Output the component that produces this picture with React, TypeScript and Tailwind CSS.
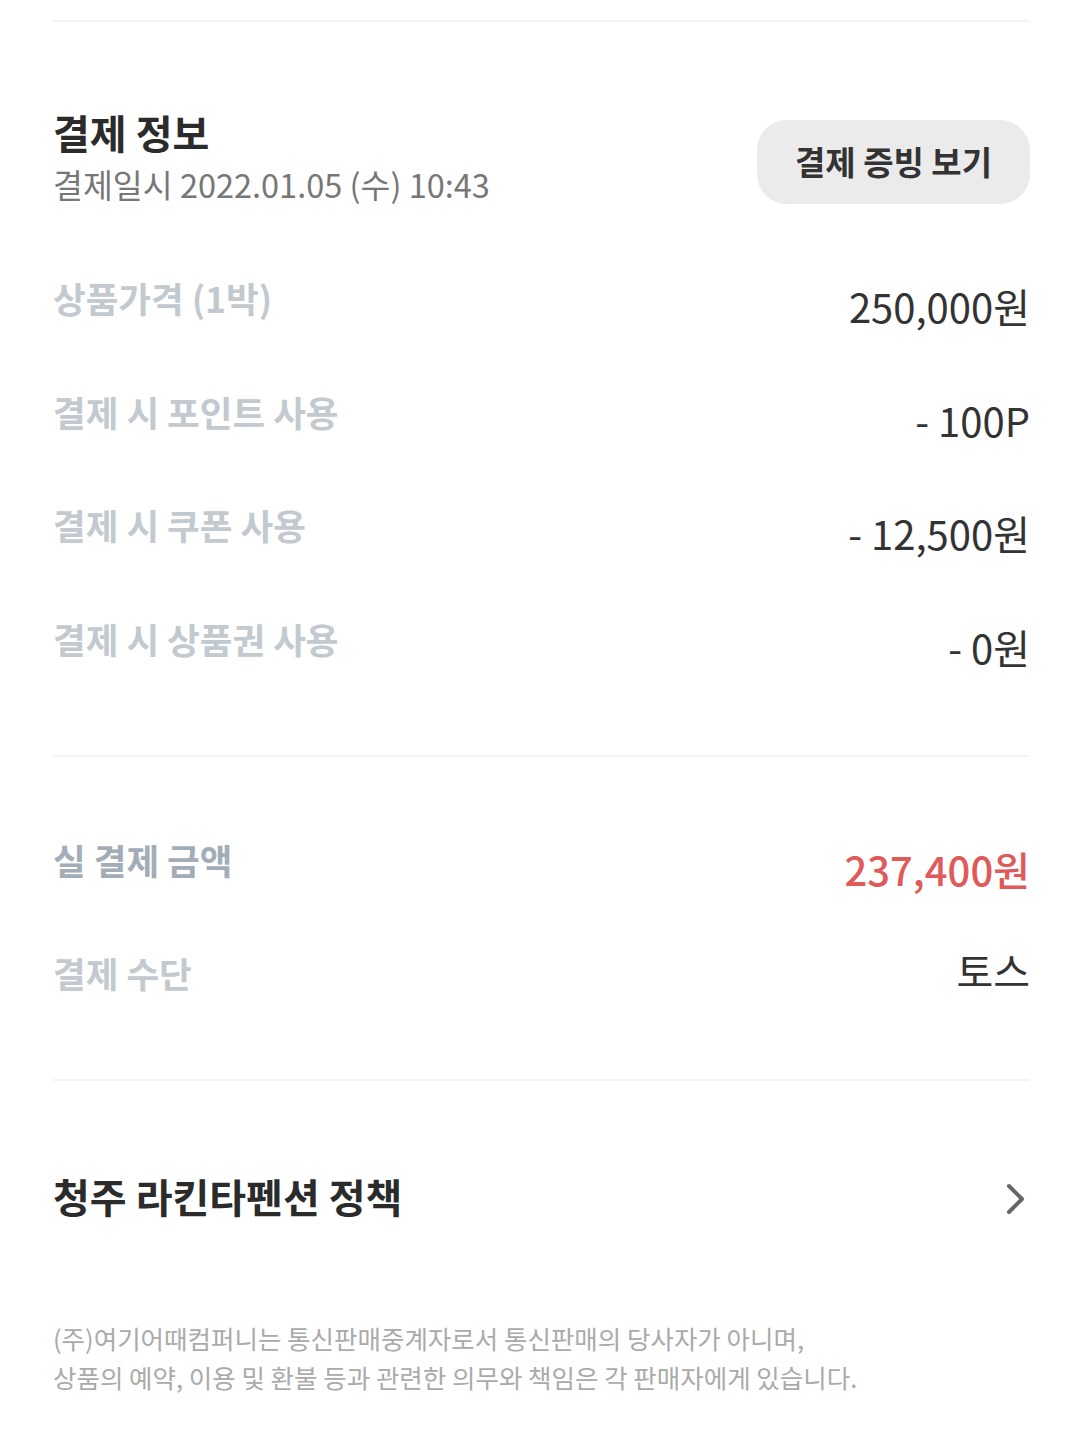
const font = { fontFamily: '"Noto Sans CJK KR", "Noto Sans", sans-serif' }

type Row = { label: string; value: string; labelClass?: string; valueClass?: string }

const priceRows: Row[] = [
  { label: '상품가격 (1박)', value: '250,000원' },
  { label: '결제 시 포인트 사용', value: '- 100P' },
  { label: '결제 시 쿠폰 사용', value: '- 12,500원' },
  { label: '결제 시 상품권 사용', value: '- 0원' },
]

function InfoRow({ label, value, labelClass, valueClass }: Row) {
  return (
    <div className="flex h-[50px] items-start justify-between">
      <span className={`text-[35.5px] font-semibold leading-[50px] ${labelClass ?? 'text-[#c2c9cf]'}`}>
        {label}
      </span>
      <span className={`text-[40px] leading-[50px] ${valueClass ?? 'mt-[8px] text-[#333333]'}`}>
        {value}
      </span>
    </div>
  )
}

export default function App() {
  return (
    <main className="min-h-screen w-[1080px] bg-white pl-[53px] pr-[50px] pt-[20px]" style={font}>
      <div className="h-[2px] w-full bg-[#f4f4f4]" />

      <section className="mt-[89px] flex items-end justify-between">
        <div className="flex flex-col">
          <h2 className="text-[40px] font-bold leading-[43px] text-[#2b2b2b]">결제 정보</h2>
          <p className="mt-[12px] text-[32.5px] leading-[36px] text-[#777777]">
            결제일시 2022.01.05 (수) 10:43
          </p>
        </div>
        <button className="-mb-[2px] flex h-[84px] w-[273px] items-center justify-center rounded-[30px] bg-[#ebebeb] text-[33px] font-bold text-[#333333]">
          결제 증빙 보기
        </button>
      </section>

      <section className="mt-[71px] flex flex-col gap-[63.5px] pb-[91px]">
        {priceRows.map((row) => (
          <InfoRow key={row.label} {...row} />
        ))}
      </section>

      <div className="h-[2px] w-full bg-[#f4f4f4]" />

      <section className="mt-[78px] flex flex-col gap-[63px] pb-[81px]">
        <InfoRow
          label="실 결제 금액"
          value="237,400원"
          labelClass="text-[#a3adb7]"
          valueClass="mt-[9px] text-[39px] font-medium text-[#e05a5a]"
        />
        <InfoRow label="결제 수단" value="토스" valueClass="-mt-[3px] text-[#333333]" />
      </section>

      <div className="h-[2px] w-full bg-[#f4f4f4]" />

      <section className="mt-[90px] flex items-center justify-between">
        <h3 className="text-[40px] font-bold leading-[50px] text-[#2b2b2b]">청주 라킨타펜션 정책</h3>
        <svg width="22" height="32" viewBox="0 0 22 32" fill="none" className="mr-[4px] mt-[6px]">
          <path d="M5 3 L18 16 L5 29" stroke="#666666" strokeWidth="4" strokeLinecap="round" strokeLinejoin="round" />
        </svg>
      </section>

      <p className="mt-[97px] text-[25.5px] leading-[39px] text-[#aaaaaa]">
        (주)여기어때컴퍼니는 통신판매중계자로서 통신판매의 당사자가 아니며,
        <br />
        상품의 예약, 이용 및 환불 등과 관련한 의무와 책임은 각 판매자에게 있습니다.
      </p>
    </main>
  )
}
